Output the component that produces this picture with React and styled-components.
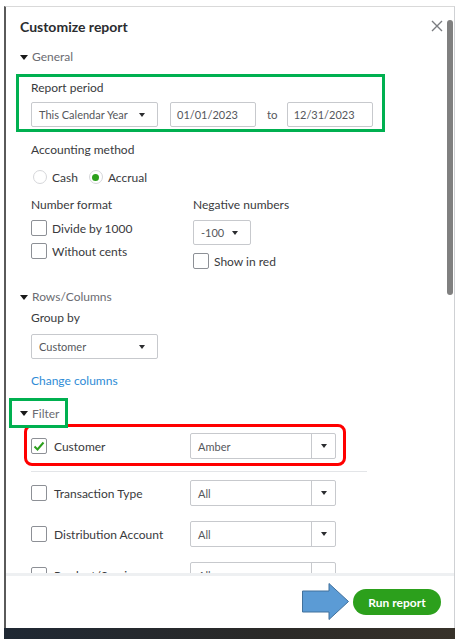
import React from 'react';
import styled, { createGlobalStyle } from 'styled-components';

const GlobalStyle = createGlobalStyle`
  html, body {
    margin: 0;
    padding: 0;
    background: #fff;
  }
  body {
    font-family: Lato, "Open Sans", Arial, sans-serif;
    color: #393a3d;
  }
`;

const Screen = styled.div`
  width: 461px;
  height: 639px;
  overflow: hidden;
  box-sizing: border-box;
  padding: 6px 0 0 4px;
  display: flex;
  flex-direction: column;
`;

const Dialog = styled.div`
  width: 451px;
  height: 622px;
  box-sizing: border-box;
  border-top: 1px solid #d9d9d9;
  border-left: 2px solid #5a5a5a;
  border-right: 1px solid #cfd1d4;
  display: flex;
  flex-direction: column;
  background: #fff;
`;

const BottomShade = styled.div`
  width: 451px;
  height: 11px;
  background: linear-gradient(90deg, #1f2833, #2b2a28 60%, #37322a);
`;

const Body = styled.div`
  flex: 1;
  display: flex;
  min-height: 0;
`;

const Main = styled.div`
  flex: 1;
  overflow: hidden;
  padding: 9px 3px 0 14px;
`;

const ScrollRail = styled.div`
  width: 8px;
  padding-top: 13px;
  box-sizing: border-box;
`;

const ScrollThumb = styled.div`
  width: 6px;
  height: 275px;
  margin-left: 1px;
  border-radius: 3px;
  background: #808080;
`;

const Header = styled.div`
  height: 20px;
  display: flex;
  align-items: center;
  justify-content: space-between;
`;

const Title = styled.h1`
  margin: 0;
  font-size: 14px;
  font-weight: 700;
  color: #2b2c2f;
`;

const CloseButton = styled.button`
  width: 13px;
  height: 13px;
  padding: 0;
  border: none;
  background: none;
  display: flex;
  align-items: center;
  justify-content: center;
`;

const Toggle = styled.div`
  display: flex;
  align-items: center;
  gap: 4px;
  font-size: 12px;
  line-height: 18px;
  color: #6b6c72;
  margin-top: ${p => p.$top || 0}px;
`;

const Triangle = styled.span`
  width: 0;
  height: 0;
  border-left: 4px solid transparent;
  border-right: 4px solid transparent;
  border-top: 5px solid #1a1a1a;
`;

const Highlight = styled.div`
  box-sizing: border-box;
  border: 3px solid #00b050;
  margin-top: ${p => p.$top}px;
  margin-left: ${p => p.$left}px;
  width: ${p => p.$width}px;
  padding: ${p => p.$pad};
  position: relative;
  z-index: 1;
`;

const FilterBox = styled.div`
  box-sizing: border-box;
  border: 3px solid #00b050;
  margin: 8px 0 0 -11px;
  width: 59px;
  height: 30px;
  padding: 1px 0 0 8px;
  display: flex;
  align-items: center;
  position: relative;
  z-index: 1;
  background: #fff;
`;

const Indent = styled.div`
  padding-left: 11px;
`;

const Label = styled.div`
  font-size: 12px;
  line-height: 18px;
  color: #393a3d;
  margin-top: ${p => p.$top || 0}px;
`;

const FieldRow = styled.div`
  display: flex;
  align-items: center;
  margin-top: ${p => p.$top || 0}px;
`;

const Select = styled.div`
  box-sizing: border-box;
  width: ${p => p.$width}px;
  height: 25px;
  border: 1px solid #c7c9cd;
  border-radius: 2px;
  padding: 0 12px 0 7px;
  display: flex;
  align-items: center;
  justify-content: space-between;
  font-size: 11px;
  color: #55575c;
  margin-top: ${p => p.$top || 0}px;
`;

const Caret = styled.span`
  width: 0;
  height: 0;
  border-left: 3.5px solid transparent;
  border-right: 3.5px solid transparent;
  border-top: 4px solid #2b2c2f;
`;

const DateInput = styled.div`
  box-sizing: border-box;
  width: 86px;
  height: 25px;
  border: 1px solid #c7c9cd;
  border-radius: 2px;
  padding-left: 6px;
  display: flex;
  align-items: center;
  font-size: 11px;
  color: #55575c;
  margin-left: ${p => p.$left || 0}px;
`;

const To = styled.span`
  font-size: 11.5px;
  color: #55575c;
  margin: 0 9px 0 11px;
`;

const RadioRow = styled.div`
  display: flex;
  align-items: center;
  height: 20px;
  margin-top: 8px;
  font-size: 12px;
  color: #393a3d;
`;

const Radio = styled.span`
  box-sizing: border-box;
  width: 14px;
  height: 14px;
  border-radius: 50%;
  border: 1px solid #d6d7da;
  margin: 0 5px 0 ${p => p.$left}px;
  display: flex;
  align-items: center;
  justify-content: center;
  &::after {
    content: '';
    width: 7px;
    height: 7px;
    border-radius: 50%;
    background: ${p => (p.$checked ? '#2ca01c' : 'transparent')};
  }
`;

const Columns = styled.div`
  display: grid;
  grid-template-columns: 162px auto;
  margin-top: 9px;
`;

const CheckRow = styled.div`
  display: flex;
  align-items: center;
  gap: ${p => p.$gap || 5}px;
  font-size: 12px;
  color: #393a3d;
  margin-top: ${p => p.$top || 0}px;
`;

const Box = styled.span`
  box-sizing: border-box;
  flex: none;
  width: 16px;
  height: 16px;
  border: 1px solid #8d9096;
  border-radius: 2px;
  background: #fff;
  display: flex;
  align-items: center;
  justify-content: center;
`;

const Link = styled.div`
  margin-top: 13px;
  font-size: 12px;
  line-height: 18px;
  color: #2e8bd6;
`;

const RedFrame = styled.div`
  box-sizing: border-box;
  width: 322px;
  height: 42px;
  margin: -4px 0 0 4px;
  border: 3px solid #ff0000;
  border-radius: 8px;
  padding: 6px 0 0 4px;
`;

const Divider = styled.div`
  width: 336px;
  height: 1px;
  margin: 5px 0 0 11px;
  background: #e3e5e8;
`;

const FilterRow = styled.div`
  display: flex;
  align-items: center;
  margin-top: ${p => p.$top || 0}px;
  padding-left: ${p => p.$indent || 0}px;
`;

const FilterLabel = styled.span`
  width: 136px;
  margin-left: 7px;
  font-size: 12px;
  color: #393a3d;
`;

const Combo = styled.div`
  box-sizing: border-box;
  width: 146px;
  height: 26px;
  border: 1px solid #c7c9cd;
  border-radius: 2px;
  display: flex;
  font-size: 11px;
  color: #55575c;
`;

const ComboValue = styled.div`
  flex: 1;
  display: flex;
  align-items: center;
  padding-left: 7px;
  border-right: 1px solid #c7c9cd;
`;

const ComboButton = styled.div`
  width: 23px;
  display: flex;
  align-items: center;
  justify-content: center;
`;

const Footer = styled.div`
  flex: none;
  height: 55px;
  box-sizing: border-box;
  border-top: 3px solid #eef0f2;
  display: flex;
  align-items: center;
  justify-content: flex-end;
  padding-right: 13px;
`;

const RunButton = styled.button`
  width: 88px;
  height: 26px;
  margin-left: 3px;
  border: none;
  border-radius: 13px;
  background: #2ca01c;
  color: #fff;
  font-family: inherit;
  font-size: 12px;
  font-weight: 700;
  padding: 0;
`;

const Check = ({ checked }) => (
  <Box>
    {checked && (
      <svg width="14" height="14" viewBox="0 0 14 14">
        <path d="M2.5 7.5 L5.5 10.5 L11.5 3.5" fill="none" stroke="#2ca01c" strokeWidth="2" />
      </svg>
    )}
  </Box>
);

const FilterItem = ({ label, value, checked, top, indent }) => (
  <FilterRow $top={top} $indent={indent}>
    <Check checked={checked} />
    <FilterLabel>{label}</FilterLabel>
    <Combo>
      <ComboValue>{value}</ComboValue>
      <ComboButton>
        <Caret />
      </ComboButton>
    </Combo>
  </FilterRow>
);

export default function App() {
  return (
    <Screen>
      <GlobalStyle />
      <Dialog>
        <Body>
          <Main>
            <Header>
              <Title>Customize report</Title>
              <CloseButton aria-label="Close">
                <svg width="12" height="12" viewBox="0 0 12 12">
                  <path d="M1 1 L11 11 M11 1 L1 11" stroke="#7a7c80" strokeWidth="1.4" />
                </svg>
              </CloseButton>
            </Header>

            <Toggle $top={12}>
              <Triangle />
              General
            </Toggle>

            <Highlight $top={8} $left={-4} $width={369} $pad="2px 0 2px 12px">
              <Label>Report period</Label>
              <FieldRow $top={5}>
                <Select $width={127}>
                  This Calendar Year
                  <Caret />
                </Select>
                <DateInput $left={12}>01/01/2023</DateInput>
                <To>to</To>
                <DateInput>12/31/2023</DateInput>
              </FieldRow>
            </Highlight>

            <Indent>
              <Label $top={9}>Accounting method</Label>
              <RadioRow>
                <Radio $left={2} />
                Cash
                <Radio $left={11} $checked />
                Accrual
              </RadioRow>

              <Columns>
                <div>
                  <Label>Number format</Label>
                  <CheckRow $top={6}>
                    <Check />
                    Divide by 1000
                  </CheckRow>
                  <CheckRow $top={7}>
                    <Check />
                    Without cents
                  </CheckRow>
                </div>
                <div>
                  <Label>Negative numbers</Label>
                  <Select $width={58} $top={6}>
                    -100
                    <Caret />
                  </Select>
                  <CheckRow $top={8}>
                    <Check />
                    Show in red
                  </CheckRow>
                </div>
              </Columns>
            </Indent>

            <Toggle $top={19}>
              <Triangle />
              Rows/Columns
            </Toggle>
            <Indent>
              <Label $top={3}>Group by</Label>
              <Select $width={127} $top={7}>
                Customer
                <Caret />
              </Select>
              <Link>Change columns</Link>
            </Indent>

            <FilterBox>
              <Toggle>
                <Triangle />
                Filter
              </Toggle>
            </FilterBox>

            <RedFrame>
              <FilterItem label="Customer" value="Amber" checked />
            </RedFrame>
            <Divider />
            <FilterItem label="Transaction Type" value="All" top={8} indent={11} />
            <FilterItem label="Distribution Account" value="All" top={15} indent={11} />
            <FilterItem label="Product/Service" value="All" top={15} indent={11} />
          </Main>
          <ScrollRail>
            <ScrollThumb />
          </ScrollRail>
        </Body>

        <Footer>
          <svg width="48" height="38" viewBox="0 0 48 38">
            <polygon
              points="0.5,8 27,8 27,0.5 46.5,18.5 27,36.5 27,29 0.5,29"
              fill="#5b9bd5"
              stroke="#41719c"
              strokeWidth="1"
            />
          </svg>
          <RunButton>Run report</RunButton>
        </Footer>
      </Dialog>
      <BottomShade />
    </Screen>
  );
}
